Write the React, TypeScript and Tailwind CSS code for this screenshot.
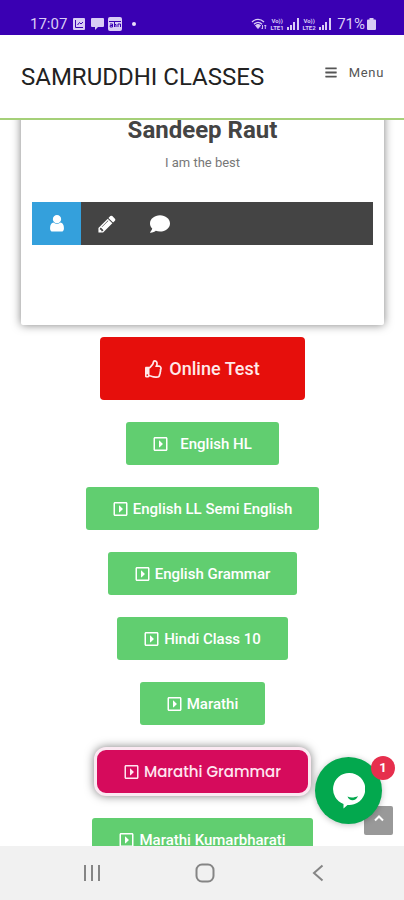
import { FaBars, FaComment, FaRegCaretSquareRight, FaRegThumbsUp } from "react-icons/fa";

type CourseLink = {
  label: string;
  spaced?: boolean;
};

const courses: CourseLink[] = [
  { label: "English HL", spaced: true },
  { label: "English LL Semi English" },
  { label: "English Grammar" },
  { label: "Hindi Class 10" },
  { label: "Marathi" },
];

const Signal = () => (
  <svg className="h-3 w-3" viewBox="0 0 12 12" fill="currentColor" aria-hidden="true">
    <path d="M0 9h2v3H0zM3 7h2v5H3zM6 4h2v8H6zM10 0h2v12h-2z" />
  </svg>
);

const VoLte = ({ sim }: { sim: number }) => (
  <span className="flex w-4 flex-col text-center text-[6px] leading-[7px] font-bold">
    <span>Vo))</span>
    <span>LTE{sim}</span>
  </span>
);

const StatusBar = () => (
  <div className="flex h-[35px] shrink-0 items-center justify-between bg-[#3a00b3] pt-3 pr-7 pl-[30px] text-[#d9ccf5]">
    <div className="flex items-center gap-[6px]">
      <span className="text-[15px] leading-4">17:07</span>
      <svg className="h-3 w-3" viewBox="0 0 12 12" fill="none" aria-hidden="true">
        <rect width="12" height="12" rx="1" fill="currentColor" />
        <path d="M2.500 2v7.500H10M4.500 7l2-2.500 1.500 1.500 2-2" stroke="#3a00b3" strokeWidth="1" />
      </svg>
      <svg className="h-3 w-[13px]" viewBox="0 0 13 12" fill="currentColor" aria-hidden="true">
        <path d="M1 0h11a1 1 0 0 1 1 1v7a1 1 0 0 1-1 1H7l-3 3V9H1a1 1 0 0 1-1-1V1a1 1 0 0 1 1-1z" />
      </svg>
      <svg className="-ml-[2px] h-[14px] w-[14px]" viewBox="0 0 14 14" fill="none" aria-hidden="true">
        <rect width="14" height="14" rx="2" fill="currentColor" />
        <path
          d="M1 4.500h12M2 7h2.500v3H2.200V8.500h2M6.500 5v5M6.500 7.500h1.500V10M10 10V7h2.500v3"
          stroke="#3a00b3"
          strokeWidth="1"
        />
      </svg>
      <span className="ml-1 h-1 w-1 rounded-full bg-[#e9e0fb]" />
    </div>
    <div className="flex items-center gap-[2px]">
      <svg className="h-3 w-4" viewBox="0 0 16 12" fill="none" stroke="currentColor" aria-hidden="true">
        <path d="M1 4c3.500-3.500 8.500-3.500 12 0M3 6.200c2.500-2.300 5.500-2.300 8 0" strokeWidth="1.400" />
        <path d="M4.500 7.500 7 10.500l2.500-3c-1.500-1.300-3.500-1.300-5 0z" fill="currentColor" />
        <path d="M11.500 7v4M10.300 9.800l1.200 1.200M14.300 11V7M13.200 8.200 14.300 7l1.100 1.200" strokeWidth=".9" />
      </svg>
      <VoLte sim={1} />
      <Signal />
      <VoLte sim={2} />
      <Signal />
      <span className="ml-1 text-[15px] leading-4">71%</span>
      <svg className="h-3 w-[9px]" viewBox="0 0 9 12" fill="currentColor" aria-hidden="true">
        <path d="M2.500 0h4v1.500H8a1 1 0 0 1 1 1V11a1 1 0 0 1-1 1H1a1 1 0 0 1-1-1V2.500a1 1 0 0 1 1-1h1.500z" />
      </svg>
    </div>
  </div>
);

const SiteHeader = () => (
  <header className="z-10 flex h-[85px] shrink-0 items-center justify-between border-b-2 border-[#a5d078] bg-white pr-5 pl-[21px]">
    <a href="#home" className="text-2xl leading-8 font-normal text-[#222]">
      SAMRUDDHI CLASSES
    </a>
    <button className="mb-2 flex items-center gap-3 text-[13px] leading-4 tracking-wider text-[#555]">
      <FaBars className="h-[13px] w-3" />
      Menu
    </button>
  </header>
);

const ProfileCard = () => (
  <section className="-mt-5 rounded-xs bg-white px-[11px] pt-4 pb-20 text-center shadow-[0_0_10px_rgba(0,0,0,0.5)]">
    <h2 className="text-2xl leading-7 font-bold text-[#444]">Sandeep Raut</h2>
    <p className="mt-[9px] text-[13px] leading-5 text-[#777]">I am the best</p>
    <div className="mt-[29px] flex h-[43px] bg-[#444] text-white">
      <button aria-label="Profile" className="flex w-[49px] items-center justify-center bg-[#34a0dc]">
        <svg className="h-[18px] w-[14px]" viewBox="0 0 1280 1664" fill="currentColor">
          <path d="M1280 1271q0 109-62.500 187T1067 1536H213q-88 0-150.500-78T0 1271q0-85 8.500-160.500t31.500-152 58.500-131 94-89T327 704q131 128 313 128t313-128q76 0 134.500 34.500t94 89 58.500 131 31.500 152 8.500 160.500zM1024 384q0 159-112.500 271.500T640 768 368.500 655.500 256 384t112.500-271.500T640 0t271.500 112.500T1024 384z" />
        </svg>
      </button>
      <button aria-label="Posts" className="flex w-[52px] items-center justify-center">
        <svg className="h-5 w-5" viewBox="0 0 1792 1792" fill="currentColor">
          <path d="M491 1536l91-91-235-235-91 91v107h128v128h107zM1014 608q0-22-22-22-10 0-17 7l-542 542q-7 7-7 17 0 22 22 22 10 0 17-7l542-542q7-7 7-17zM960 416l416 416-832 832H128v-416zM1643 512q0 53-37 90l-166 166-416-416 166-165q36-38 90-38 53 0 91 38l235 234q37 39 37 91z" />
        </svg>
      </button>
      <button aria-label="Comments" className="flex w-[54px] items-center justify-center">
        <FaComment className="h-5 w-5" />
      </button>
    </div>
  </section>
);

const CourseButton = ({ label, spaced }: CourseLink) => (
  <a
    href="#course"
    className={`flex h-[43px] items-center rounded-[3px] bg-[#61ce70] px-[27px] text-[15px] leading-5 font-medium text-white ${
      spaced ? "gap-3" : "gap-[5px]"
    }`}
  >
    <FaRegCaretSquareRight className="h-4 w-[15px]" />
    {label}
  </a>
);

const FloatingButtons = () => (
  <>
    <button
      aria-label="Back to top"
      className="absolute right-[11px] bottom-[11px] flex h-[29px] w-[29px] justify-center rounded-xs bg-[#999] pt-2 text-white"
    >
      <svg className="h-2 w-[10px]" viewBox="0 0 10 8" fill="none" stroke="currentColor" strokeWidth="2">
        <path d="M1 6.500 5 2.500l4 4" />
      </svg>
    </button>
    <button
      aria-label="Open chat"
      className="absolute right-[22px] bottom-[22px] flex h-[67px] w-[67px] items-center justify-center rounded-full bg-[#03a84e] shadow-[0_1px_6px_rgba(0,0,0,0.25)]"
    >
      <svg className="h-9 w-8" viewBox="0 0 32 36">
        <path d="M16 0a16 16 0 1 1-1.500 31.900L10.500 35.500V31A16 16 0 0 1 16 0z" fill="#fff" />
        <path d="M14.500 23.500c3 1.500 7 1.300 10.500-.5-1.200 3-3.200 4.300-5.500 4.300s-4-1.300-5-3.800z" fill="#03a84e" />
      </svg>
    </button>
    <span className="absolute right-[9px] bottom-[66px] flex h-6 w-6 items-center justify-center rounded-full bg-[#e62f4d] text-[13px] leading-4 font-bold text-white">
      1
    </span>
  </>
);

const NavigationBar = () => (
  <nav className="flex h-[54px] shrink-0 items-center justify-between bg-[#f1f1f1] pr-[74px] pl-20 text-[#858585]">
    <button aria-label="Recent apps" className="flex w-6 justify-center">
      <svg className="h-[18px] w-[18px]" viewBox="0 0 18 18" stroke="currentColor" strokeWidth="2">
        <path d="M2 1v16M9 1v16M16 1v16" />
      </svg>
    </button>
    <button aria-label="Home" className="flex w-6 justify-center">
      <svg className="h-5 w-5" viewBox="0 0 20 20" fill="none" stroke="currentColor" strokeWidth="2">
        <rect x="1.500" y="1.500" width="17" height="17" rx="5.500" />
      </svg>
    </button>
    <button aria-label="Back" className="flex w-6 justify-center">
      <svg className="h-[18px] w-3" viewBox="0 0 12 18" fill="none" stroke="currentColor" strokeWidth="2">
        <path d="M10.500 1.500 2 9l8.500 7.500" />
      </svg>
    </button>
  </nav>
);

export default function App() {
  return (
    <div className="flex h-screen flex-col overflow-hidden bg-white font-[Roboto,sans-serif]">
      <StatusBar />
      <SiteHeader />
      <div className="relative min-h-0 flex-1 overflow-hidden">
        <main className="pr-5 pl-[21px]">
          <ProfileCard />
          <div className="mt-3 flex flex-col items-center gap-[22px]">
            <a
              href="#test"
              className="flex h-[63px] items-center gap-[6px] rounded-[4px] bg-[#e60f0c] px-[45px] text-lg leading-6 font-medium text-[#ffe9e9]"
            >
              <FaRegThumbsUp className="h-[18px] w-[18px]" />
              Online Test
            </a>
            {courses.map((course) => (
              <CourseButton key={course.label} {...course} />
            ))}
            <a
              href="#course"
              className="flex h-[49px] items-center gap-[5px] rounded-xl border-3 border-[#fbe9f2] bg-[#d60b5c] px-[27px] font-[Poppins,Inter,sans-serif] text-[15px] leading-5 font-medium text-[#ffe6f0] shadow-[0_0_10px_rgba(0,0,0,0.5)]"
            >
              <FaRegCaretSquareRight className="h-4 w-[15px]" />
              Marathi Grammar
            </a>
            <CourseButton label="Marathi Kumarbharati" />
          </div>
        </main>
        <FloatingButtons />
      </div>
      <NavigationBar />
    </div>
  );
}
